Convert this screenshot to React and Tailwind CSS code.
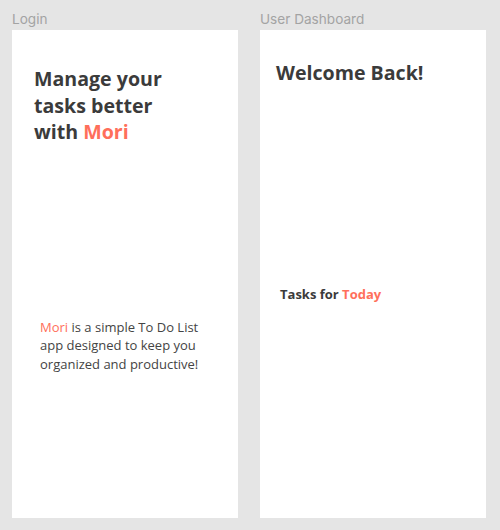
export default function App() {
  return (
    <div className="w-[500px] h-[530px] bg-[#e5e5e5] flex gap-[22px] pl-[12px] pt-[11px] overflow-hidden">
      {/* Login frame */}
      <div className="flex flex-col gap-[3px]">
        <div className="text-[13.6px] leading-[16px] text-[#a3a3a3] font-['Inter',sans-serif]">Login</div>
        <div className="w-[226px] h-[488px] bg-white font-['Open_Sans',sans-serif]">
          <h1 className="pt-[36px] pl-[22px] text-[19.6px] leading-[26.5px] font-bold text-[#3b3b3b]">
            Manage your
            <br />
            tasks better
            <br />
            with <span className="text-[#ff6f5b]">Mori</span>
          </h1>
          <p className="mt-[172px] pl-[28px] pr-[20px] text-[13px] leading-[18.5px] text-[#444444]">
            <span className="text-[#ff6f5b]">Mori</span> is a simple To Do List
            <br />
            app designed to keep you
            <br />
            organized and productive!
          </p>
        </div>
      </div>

      {/* User Dashboard frame */}
      <div className="flex flex-col gap-[3px]">
        <div className="text-[13.6px] leading-[16px] text-[#a3a3a3] font-['Inter',sans-serif]">User Dashboard</div>
        <div className="w-[226px] h-[488px] bg-white font-['Open_Sans',sans-serif]">
          <h2 className="pt-[30px] pl-[16px] text-[19.6px] leading-[26px] font-bold text-[#3b3b3b]">
            Welcome Back!
          </h2>
          <h3 className="mt-[199px] pl-[20px] text-[13px] leading-[18px] font-bold text-[#3b3b3b]">
            Tasks for <span className="text-[#ff6f5b]">Today</span>
          </h3>
        </div>
      </div>
    </div>
  );
}
